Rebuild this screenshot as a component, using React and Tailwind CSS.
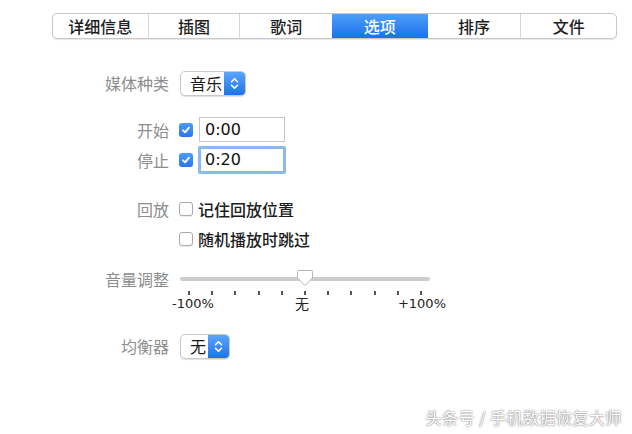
import React from "react";

const cjk = "font-['Noto_Sans_CJK_SC','Noto_Sans',sans-serif]";
const latin = "font-['DejaVu_Sans','Noto_Sans_CJK_SC',sans-serif]";

const tabs = ["详细信息", "插图", "歌词", "选项", "排序", "文件"];
const tabWidths = ["w-[95px]", "w-[92px]", "w-[93px]", "w-[96px]", "w-[93px]", "w-[96px]"];

function Chevrons() {
  return (
    <svg width="9" height="13" viewBox="0 0 9 13" fill="none" stroke="white" strokeWidth="1.6" strokeLinecap="round" strokeLinejoin="round">
      <path d="M1.5 4.8 L4.5 1.8 L7.5 4.8" />
      <path d="M1.5 8.2 L4.5 11.2 L7.5 8.2" />
    </svg>
  );
}

function PopUp({ value, width }) {
  return (
    <div className={`flex h-[25px] ${width} rounded-[5px] border border-[#c9c9c9] bg-white shadow-[0_1px_1px_rgba(0,0,0,0.12)] overflow-hidden`}>
      <div className={`flex-1 flex items-center pl-[9px] text-[16px] text-[#1a1a1a] ${cjk}`}>{value}</div>
      <div className="w-[21px] flex items-center justify-center bg-gradient-to-b from-[#5aa5fb] to-[#1d71ec]">
        <Chevrons />
      </div>
    </div>
  );
}

function Check({ on }) {
  if (on) {
    return (
      <div className="w-[14px] h-[14px] rounded-[3px] bg-gradient-to-b from-[#4c9cf8] to-[#2777ec] flex items-center justify-center">
        <svg width="10" height="10" viewBox="0 0 10 10" fill="none" stroke="white" strokeWidth="1.8" strokeLinecap="round" strokeLinejoin="round">
          <path d="M2 5.3 L4.1 7.4 L8 2.6" />
        </svg>
      </div>
    );
  }
  return <div className="w-[14px] h-[14px] rounded-[3px] border border-[#aaaaaa] bg-white shadow-[0_1px_1px_rgba(0,0,0,0.08)]" />;
}

function Label({ children }) {
  return (
    <div className={`w-[170px] shrink-0 pr-[1px] text-right text-[16px] text-[#8d8d8d] ${cjk}`}>{children}</div>
  );
}

export default function App() {
  const ticks = Array.from({ length: 11 });
  return (
    <div className="w-[632px] h-[434px] bg-white flex flex-col relative overflow-hidden">
      {/* segmented tab control */}
      <div className="mt-[13px] ml-[52px] flex h-[26px] w-[565px] rounded-[5px] border border-[#c8c8c8] bg-white shadow-[0_1px_1px_rgba(0,0,0,0.1)] overflow-hidden">
        {tabs.map((t, i) => (
          <div
            key={t}
            className={`${tabWidths[i]} flex items-center justify-center text-[16px] font-medium ${cjk} ${
              i === 3
                ? "bg-gradient-to-b from-[#4d9ff9] to-[#1c70ea] text-white"
                : "text-[#1e1e1e]"
            } ${i > 0 && i !== 3 && i !== 4 ? "border-l border-[#d6d6d6]" : ""}`}
          >
            {t}
          </div>
        ))}
      </div>

      {/* media kind */}
      <div className="mt-[31px] flex items-center h-[26px]">
        <Label>媒体种类</Label>
        <div className="ml-[10px]">
          <PopUp value="音乐" width="w-[66px]" />
        </div>
      </div>

      {/* start */}
      <div className="mt-[21px] flex items-center h-[25px]">
        <Label>开始</Label>
        <div className="ml-[9px] flex items-center gap-[6px]">
          <Check on />
          <div className={`w-[86px] h-[25px] border border-[#c6c6c6] bg-white flex items-center pl-[5px] text-[16px] text-[#111] ${latin}`}>0:00</div>
        </div>
      </div>

      {/* stop */}
      <div className="mt-[4px] flex items-center h-[28px]">
        <Label>停止</Label>
        <div className="ml-[9px] flex items-center gap-[5px]">
          <Check on />
          <div className={`w-[88px] h-[28px] border-[3px] border-[#8ab8ef] rounded-[2px] bg-white flex items-center pl-[4px] text-[16px] text-[#111] ${latin}`}>0:20</div>
        </div>
      </div>

      {/* playback */}
      <div className="mt-[25px] flex items-center h-[20px]">
        <Label>回放</Label>
        <div className="ml-[9px] flex items-center gap-[5px]">
          <Check />
          <span className={`text-[16px] font-medium text-[#1c1c1c] ${cjk}`}>记住回放位置</span>
        </div>
      </div>
      <div className="mt-[10px] flex items-center h-[20px]">
        <div className="w-[170px] shrink-0" />
        <div className="ml-[9px] flex items-center gap-[5px]">
          <Check />
          <span className={`text-[16px] font-medium text-[#1c1c1c] ${cjk}`}>随机播放时跳过</span>
        </div>
      </div>

      {/* volume adjustment */}
      <div className="mt-[21px] flex items-start">
        <div className="h-[18px] flex items-center">
          <Label>音量调整</Label>
        </div>
        <div className="ml-[2px] flex flex-col">
          <div className="ml-[8px] w-[250px] h-[18px] flex items-center justify-center relative">
            <div className="w-full h-[4px] rounded-full bg-[#cdcdcd]" />
            <svg className="absolute left-[116px] top-[-1px]" width="18" height="18" viewBox="0 0 18 18">
              <path d="M2.5 1.5 H15.5 Q16.5 1.5 16.5 2.5 V9 L9 16.5 L1.5 9 V2.5 Q1.5 1.5 2.5 1.5 Z" fill="white" stroke="#b5b5b5" strokeWidth="1" />
            </svg>
          </div>
          <div className="ml-[16px] w-[234px] mt-[3px] flex justify-between">
            {ticks.map((_, i) => (
              <div key={i} className="w-[2px] h-[4px] bg-[#555]" />
            ))}
          </div>
          <div className={`w-[274px] mt-[0px] h-[17px] leading-[17px] flex justify-between text-[13px] text-[#222] ${latin}`}>
            <span>-100%</span>
            <span className={`${cjk} text-[14px] pr-[8px]`}>无</span>
            <span>+100%</span>
          </div>
        </div>
      </div>

      {/* equalizer */}
      <div className="mt-[21px] flex items-center h-[26px]">
        <Label>均衡器</Label>
        <div className="ml-[10px]">
          <PopUp value="无" width="w-[50px]" />
        </div>
      </div>

      {/* watermark */}
      <div className={`absolute right-[10px] bottom-[5px] text-[16px] tracking-[0.5px] text-white ${cjk} [text-shadow:0_0_2px_#777,0_0_1px_#999]`}>
        头条号 / 手机数据恢复大师
      </div>
    </div>
  );
}
